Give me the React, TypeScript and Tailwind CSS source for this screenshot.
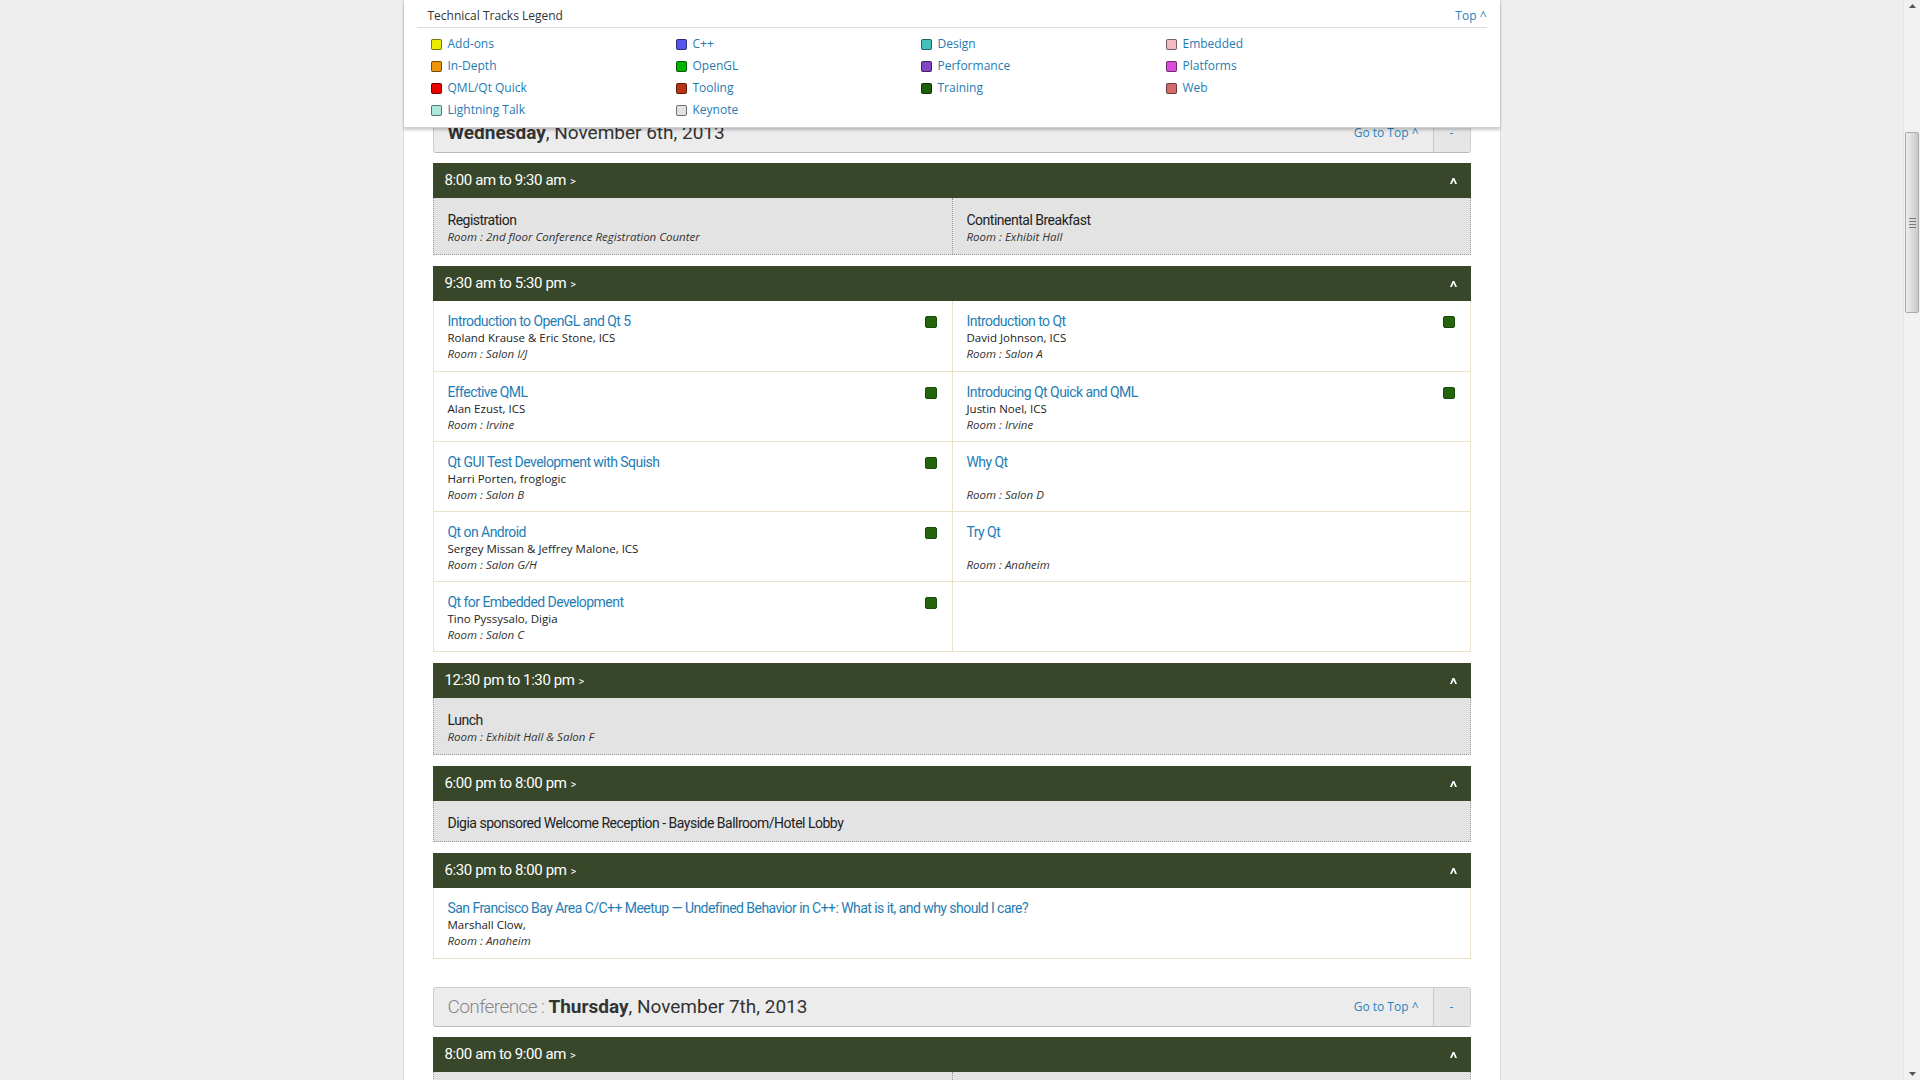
import React from 'react';

type Talk = { title: string; speaker?: string; room: string; track?: boolean };

const legend: { name: string; color: string }[] = [
  { name: 'Add-ons', color: '#ecec00' },
  { name: 'C++', color: '#5555ee' },
  { name: 'Design', color: '#44c0c0' },
  { name: 'Embedded', color: '#f2bcc4' },
  { name: 'In-Depth', color: '#ee9408' },
  { name: 'OpenGL', color: '#00b400' },
  { name: 'Performance', color: '#8444c4' },
  { name: 'Platforms', color: '#dc4cdc' },
  { name: 'QML/Qt Quick', color: '#ee0000' },
  { name: 'Tooling', color: '#b83414' },
  { name: 'Training', color: '#1e600a' },
  { name: 'Web', color: '#d46c6c' },
  { name: 'Lightning Talk', color: '#aaeadc' },
  { name: 'Keynote', color: '#e2e2e2' },
];

const leftTalks: Talk[] = [
  { title: 'Introduction to OpenGL and Qt 5', speaker: 'Roland Krause & Eric Stone, ICS', room: 'Salon I/J', track: true },
  { title: 'Effective QML', speaker: 'Alan Ezust, ICS', room: 'Irvine', track: true },
  { title: 'Qt GUI Test Development with Squish', speaker: 'Harri Porten, froglogic', room: 'Salon B', track: true },
  { title: 'Qt on Android', speaker: 'Sergey Missan & Jeffrey Malone, ICS', room: 'Salon G/H', track: true },
  { title: 'Qt for Embedded Development', speaker: 'Tino Pyssysalo, Digia', room: 'Salon C', track: true },
];

const rightTalks: (Talk | null)[] = [
  { title: 'Introduction to Qt', speaker: 'David Johnson, ICS', room: 'Salon A', track: true },
  { title: 'Introducing Qt Quick and QML', speaker: 'Justin Noel, ICS', room: 'Irvine', track: true },
  { title: 'Why Qt', room: 'Salon D' },
  { title: 'Try Qt', room: 'Anaheim' },
  null,
];

function Caret() {
  return (
    <svg width="7" height="6" viewBox="0 0 7 6" className="block">
      <path d="M0 6 L2.6 0 H4.4 L7 6 H5.2 L3.5 2.2 L1.8 6 Z" fill="#ffffff" />
    </svg>
  );
}

function SlotBar({ time }: { time: string }) {
  return (
    <div className="h-[35px] bg-[#38472a] flex items-center justify-between pl-[12px] pr-[14px] text-white font-['Roboto',sans-serif]">
      <span className="text-[15px] tracking-[-0.4px]">
        {time}
        <span className="text-[11px] ml-[4px]">&gt;</span>
      </span>
      <Caret />
    </div>
  );
}

function DayHeader({ prefix, day, rest }: { prefix?: string; day: string; rest: string }) {
  return (
    <div className="h-[40px] flex items-stretch bg-[#ececec] border border-[#cdcdcd] border-b-[#b9b9b9] rounded-[3px]">
      <div className="flex-1 flex items-center pl-[14px] font-['Roboto',sans-serif] text-[19px] text-[#333] whitespace-pre">
        {prefix && <span className="font-light text-[#888] tracking-[-0.6px]">{prefix} </span>}
        <span className="font-bold">{day}</span>
        <span>{rest}</span>
      </div>
      <a className="flex items-center pr-[14px] text-[12px] text-[#2a83bd]">Go to Top ^</a>
      <div className="w-[37px] border-l border-[#c9c9c9] bg-[#e6e6e6] flex items-center justify-center text-[12px] text-[#2a83bd]">-</div>
    </div>
  );
}

function TalkCell({ t, right, first }: { t: Talk | null; right?: boolean; first?: boolean }) {
  return (
    <div className={`h-[70px] pl-[14px] pr-[15px] pt-[11px] border-[#ebe2ca] ${first ? '' : 'border-t'} ${right ? 'border-l' : ''}`}>
      {t && (
        <>
          <div className="flex justify-between items-start">
            <a className="font-['Roboto',sans-serif] text-[14px] leading-[18px] tracking-[-0.55px] text-[#1f7db5]">{t.title}</a>
            {t.track && <span className="mt-[4px] w-[12px] h-[12px] rounded-[2px] bg-[#23640c] border border-[#1a4a0a]" />}
          </div>
          <div className="h-[16px] text-[11.5px] leading-[16px] text-[#222]">{t.speaker}</div>
          <div className="text-[11.5px] leading-[16px] italic text-[#333]">Room : {t.room}</div>
        </>
      )}
    </div>
  );
}

function GrayCell({ title, room, right }: { title: string; room?: string; right?: boolean }) {
  return (
    <div className={`pl-[14px] pt-[13px] pb-[9px] border-dotted border-[#9a9a9a] ${right ? 'border-l' : ''}`}>
      <div className="font-['Roboto',sans-serif] text-[14px] leading-[18px] tracking-[-0.5px] text-[#222]">{title}</div>
      {room && <div className="text-[11.5px] leading-[16px] italic text-[#333]">Room : {room}</div>}
    </div>
  );
}

export default function App() {
  return (
    <div className="h-[1080px] overflow-hidden flex bg-[#eeeeee] font-['Open_Sans',sans-serif]">
      <div className="flex-1 flex justify-center">
        <div className="relative w-[1098px] bg-white border-x border-[#dcdcdc]">
          {/* legend, fixed over the schedule */}
          <div className="absolute top-0 left-0 right-0 h-[128px] bg-white z-10 shadow-[0_2px_3px_rgba(0,0,0,0.22)] border-b border-[#cfcfcf]">
            <div className="mx-[13px]">
              <div className="h-[28px] flex items-end justify-between pl-[11px] pb-[3px] border-b border-[#dedede] text-[12px] leading-[16px]">
                <span className="text-[#333]">Technical Tracks Legend</span>
                <a className="text-[#2a83bd]">Top ^</a>
              </div>
              <div className="grid grid-cols-[245px_245px_245px_245px] pl-[14px] pt-[5px]">
                {legend.map((l) => (
                  <div key={l.name} className="h-[22px] flex items-center gap-[6px]">
                    <span
                      className="w-[11px] h-[11px] rounded-[2px] border border-[rgba(0,0,0,0.5)]"
                      style={{ backgroundColor: l.color }}
                    />
                    <a className="text-[12px] text-[#1f7ab2]">{l.name}</a>
                  </div>
                ))}
              </div>
            </div>
          </div>

          <main className="px-[29px] pt-[113px]">
            {/* Wednesday */}
            <DayHeader day="Wednesday" rest=", November 6th, 2013" />

            <div className="mt-[10px] mb-[11px]">
              <SlotBar time="8:00 am to 9:30 am" />
              <div className="grid grid-cols-2 bg-[#e3e3e3] border border-dotted border-[#9a9a9a] border-t-0">
                <GrayCell title="Registration" room="2nd floor Conference Registration Counter" />
                <GrayCell title="Continental Breakfast" room="Exhibit Hall" right />
              </div>
            </div>

            <div className="mb-[11px]">
              <SlotBar time="9:30 am to 5:30 pm" />
              <div className="grid grid-cols-2 border border-t-0 border-[#ebe2ca]">
                {leftTalks.map((t, i) => (
                  <React.Fragment key={t.title}>
                    <TalkCell t={t} first={i === 0} />
                    <TalkCell t={rightTalks[i]} right first={i === 0} />
                  </React.Fragment>
                ))}
              </div>
            </div>

            <div className="mb-[11px]">
              <SlotBar time="12:30 pm to 1:30 pm" />
              <div className="bg-[#e3e3e3] border border-dotted border-[#9a9a9a] border-t-0">
                <GrayCell title="Lunch" room="Exhibit Hall & Salon F" />
              </div>
            </div>

            <div className="mb-[11px]">
              <SlotBar time="6:00 pm to 8:00 pm" />
              <div className="bg-[#e3e3e3] border border-dotted border-[#9a9a9a] border-t-0">
                <GrayCell title="Digia sponsored Welcome Reception - Bayside Ballroom/Hotel Lobby" />
              </div>
            </div>

            <div className="mb-[11px]">
              <SlotBar time="6:30 pm to 8:00 pm" />
              <div className="border border-t-0 border-[#ebe2ca]">
                <TalkCell
                  t={{
                    title: 'San Francisco Bay Area C/C++ Meetup — Undefined Behavior in C++: What is it, and why should I care?',
                    speaker: 'Marshall Clow,',
                    room: 'Anaheim',
                  }}
                  first
                />
              </div>
            </div>

            {/* Thursday */}
            <div className="pt-[17px]">
              <DayHeader prefix="Conference :" day="Thursday" rest=", November 7th, 2013" />
              <div className="mt-[10px]">
                <SlotBar time="8:00 am to 9:00 am" />
                <div className="grid grid-cols-2 bg-[#e3e3e3] border border-dotted border-[#9a9a9a] border-t-0">
                  <GrayCell title="Registration" room="2nd floor Conference Registration Counter" />
                  <GrayCell title="Continental Breakfast" room="Exhibit Hall" right />
                </div>
              </div>
            </div>
          </main>
        </div>
      </div>

      {/* scrollbar */}
      <div className="w-[17px] h-full flex flex-col items-center bg-[#f1f1f1] border-l border-[#e4e4e4]">
        <div className="h-[12px] flex items-center justify-center">
          <svg width="7" height="4" viewBox="0 0 7 4"><path d="M0 4 L3.5 0 L7 4 Z" fill="#555" /></svg>
        </div>
        <div className="mt-[120px] w-[14px] h-[181px] rounded-[2px] border border-[#a9a9a9] bg-gradient-to-r from-[#eeeeee] to-[#c9c9c9] flex flex-col items-center justify-center gap-[2px]">
          <span className="w-[7px] h-px bg-[#7a7a7a]" />
          <span className="w-[7px] h-px bg-[#7a7a7a]" />
          <span className="w-[7px] h-px bg-[#7a7a7a]" />
          <span className="w-[7px] h-px bg-[#7a7a7a]" />
        </div>
        <div className="flex-1" />
        <div className="h-[12px] flex items-center justify-center">
          <svg width="7" height="4" viewBox="0 0 7 4"><path d="M0 0 L7 0 L3.5 4 Z" fill="#555" /></svg>
        </div>
      </div>
    </div>
  );
}
